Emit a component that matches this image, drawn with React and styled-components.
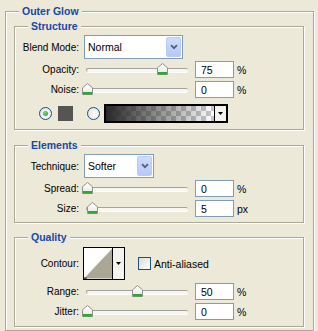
import React from 'react';
import styled, { createGlobalStyle } from 'styled-components';

const GlobalStyle = createGlobalStyle`
  html, body {
    margin: 0;
    padding: 0;
    background: #ece9d8;
  }
  body {
    width: 318px;
    height: 331px;
    overflow: hidden;
    font-family: "Liberation Sans", Arial, sans-serif;
    font-size: 10px;
    color: #000;
  }
`;

const Group = styled.fieldset`
  margin: ${p => p.$margin};
  padding: ${p => p.$padding};
  border: 1px solid #aca899;
  box-shadow: 1px 1px 0 #fff, inset 1px 1px 0 #fff;
  min-width: 0;
`;

const Title = styled.legend`
  margin-left: ${p => p.$indent}px;
  padding: 0 3px;
  background: #ece9d8;
  color: #1748a8;
  font-weight: bold;
  font-size: 10.5px;
  line-height: 13px;
`;

const Row = styled.div`
  display: flex;
  align-items: center;
  height: ${p => p.$h || 17}px;
  margin-top: ${p => p.$mt ?? 3}px;
  padding-left: ${p => p.$indent || 0}px;
`;

const Label = styled.span`
  width: 64px;
  flex-shrink: 0;
  margin-right: 4px;
  text-align: right;
  white-space: nowrap;
`;

const Select = styled.div`
  box-sizing: border-box;
  display: flex;
  align-items: center;
  justify-content: space-between;
  width: ${p => p.$w}px;
  height: 24px;
  margin-left: 1px;
  padding: 1px 1px 1px 3px;
  background: #fff;
  border: 1px solid #7f9db9;
  font-size: 10.5px;
`;

const DropButton = styled.div`
  box-sizing: border-box;
  display: flex;
  align-items: center;
  justify-content: center;
  width: 15px;
  height: 20px;
  border: 1px solid #b9cbf5;
  border-radius: 2px;
  background: linear-gradient(to bottom, #cfdcfc, #b6c9f7);
`;

const Chevron = () => (
  <svg width="8" height="6" viewBox="0 0 8 6">
    <path d="M1 1.2 L4 4.2 L7 1.2" fill="none" stroke="#4d6185" strokeWidth="1.8" />
  </svg>
);

const SliderBox = styled.div`
  position: relative;
  width: 109px;
  height: 17px;
  flex-shrink: 0;
`;

const Track = styled.div`
  position: absolute;
  left: 3px;
  right: 4px;
  top: 7px;
  height: 3px;
  border-radius: 2px;
  border-top: 1px solid #a3a29c;
  border-left: 1px solid #a3a29c;
  background: #f7f6f1;
  box-shadow: 0 1px 0 #fff;
`;

const ThumbSvg = styled.svg`
  position: absolute;
  top: 2px;
`;

const Thumb = ({ value }) => (
  <ThumbSvg width="11" height="12" viewBox="0 0 11 12" style={{ left: value - 1 }}>
    <defs>
      <linearGradient id="tg" x1="0" y1="0" x2="0" y2="1">
        <stop offset="0" stopColor="#ffffff" />
        <stop offset="1" stopColor="#e8e8e0" />
      </linearGradient>
    </defs>
    <path d="M0.5 11.5 V4.8 L5.5 0.5 L10.5 4.8 V11.5 Z" fill="url(#tg)" stroke="#8c9290" />
    <rect x="1" y="9" width="9" height="2.5" fill="#30a830" />
  </ThumbSvg>
);

const Slider = ({ value }) => (
  <SliderBox>
    <Track />
    <Thumb value={value} />
  </SliderBox>
);

const Field = styled.input`
  box-sizing: border-box;
  width: 39px;
  height: 17px;
  margin: 0 0 0 3px;
  padding: 0 0 0 5px;
  border: 1px solid #7f9db9;
  background: #fff;
  font-family: inherit;
  font-size: 10.5px;
  color: #000;
  outline: none;
`;

const Unit = styled.span`
  margin-left: 3px;
  font-size: 10.5px;
`;

const SliderRow = ({ label, value, unit = '%', mt }) => (
  <Row $mt={mt}>
    <Label>{label}</Label>
    <Slider value={value} />
    <Field readOnly value={value} />
    <Unit>{unit}</Unit>
  </Row>
);

const Radio = styled.span`
  box-sizing: border-box;
  position: relative;
  width: 13px;
  height: 13px;
  margin-right: ${p => p.$gap}px;
  border-radius: 50%;
  border: 1px solid #1c5180;
  background: radial-gradient(circle at 60% 60%, #fff 0, #f0efe9 50%, #d9d6ca 100%);
  flex-shrink: 0;
  &::after {
    content: '';
    display: ${p => (p.$checked ? 'block' : 'none')};
    position: absolute;
    left: 3px;
    top: 3px;
    width: 5px;
    height: 5px;
    border-radius: 50%;
    background: radial-gradient(circle at 40% 40%, #6ee06e, #21a121);
  }
`;

const Swatch = styled.div`
  width: 15px;
  height: 15px;
  margin-right: 14px;
  background: #555555;
  flex-shrink: 0;
`;

const GradientPicker = styled.div`
  box-sizing: border-box;
  display: flex;
  width: 124px;
  height: 19px;
  border: 2px solid #000;
`;

const GradientStrip = styled.div`
  flex: 1;
  background:
    linear-gradient(to right, rgba(40, 40, 40, 1), rgba(40, 40, 40, 0)),
    repeating-conic-gradient(#c8c8c8 0 25%, #ffffff 0 50%) 0 0 / 10px 10px;
`;

const PickerArrow = styled.div`
  display: flex;
  align-items: center;
  justify-content: center;
  width: ${p => p.$w}px;
  border-left: 1px solid #000;
  background: #f4f3ee;
`;

const Caret = () => (
  <svg width="5" height="3" viewBox="0 0 5 3">
    <path d="M0 0 H5 L2.5 3 Z" fill="#000" />
  </svg>
);

const ContourBox = styled.div`
  box-sizing: border-box;
  display: flex;
  width: 42px;
  height: 33px;
  border: 1px solid #000;
  background: #fff;
`;

const Checkbox = styled.span`
  box-sizing: border-box;
  width: 13px;
  height: 13px;
  margin: 0 3px 0 13px;
  border: 1px solid #1c5180;
  background: linear-gradient(135deg, #dcdbd5, #fff);
`;

const CheckLabel = styled.span`
  font-size: 10.5px;
`;

export default function App() {
  return (
    <>
      <GlobalStyle />
      <Group $margin="5px 4px 0 5px" $padding="2px 9px 3px 8px">
        <Title $indent={5}>Outer Glow</Title>

        <Group $margin="0" $padding="0 0 6px 0">
          <Title $indent={13}>Structure</Title>
          <Row $h={24} $mt={2}>
            <Label>Blend Mode:</Label>
            <Select $w={99}>
              Normal
              <DropButton><Chevron /></DropButton>
            </Select>
          </Row>
          <SliderRow label="Opacity:" value={75} mt={2} />
          <SliderRow label="Noise:" value={0} />
          <Row $h={19} $mt={6} $indent={24}>
            <Radio $checked $gap={6} />
            <Swatch />
            <Radio $gap={4} />
            <GradientPicker>
              <GradientStrip />
              <PickerArrow $w={11}><Caret /></PickerArrow>
            </GradientPicker>
          </Row>
        </Group>

        <Group $margin="9px 0 0 0" $padding="0 0 5px 0">
          <Title $indent={13}>Elements</Title>
          <Row $h={24} $mt={2}>
            <Label>Technique:</Label>
            <Select $w={70}>
              Softer
              <DropButton><Chevron /></DropButton>
            </Select>
          </Row>
          <SliderRow label="Spread:" value={0} mt={2} />
          <SliderRow label="Size:" value={5} unit="px" />
        </Group>

        <Group $margin="8px 0 0 0" $padding="0 0 6px 0">
          <Title $indent={13}>Quality</Title>
          <Row $h={33} $mt={3}>
            <Label>Contour:</Label>
            <ContourBox>
              <svg width="29" height="31" viewBox="0 0 29 31">
                <polygon points="0,31 29,0 29,31" fill="#aba796" />
                <path d="M0 30.5 H3" stroke="#000" strokeWidth="1" />
              </svg>
              <PickerArrow $w={11}><Caret /></PickerArrow>
            </ContourBox>
            <Checkbox />
            <CheckLabel>Anti-aliased</CheckLabel>
          </Row>
          <SliderRow label="Range:" value={50} />
          <SliderRow label="Jitter:" value={0} />
        </Group>
      </Group>
    </>
  );
}
